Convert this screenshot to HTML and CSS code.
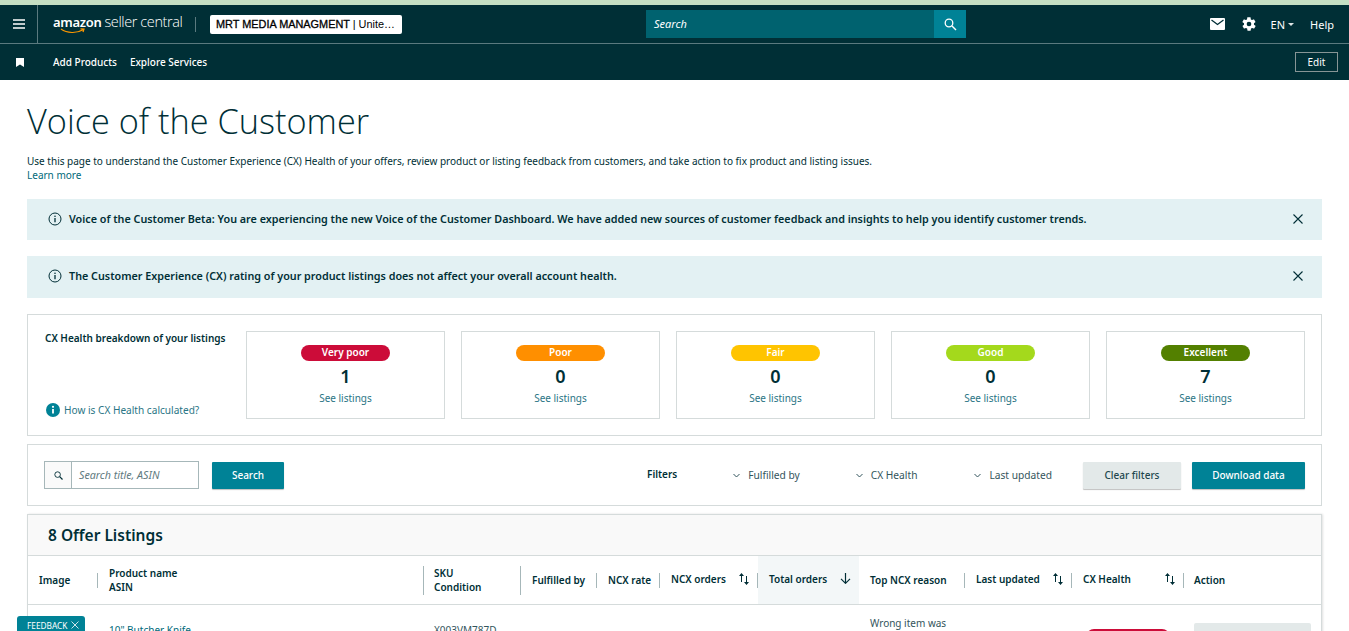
FILE: index.html
```html
<!DOCTYPE html>
<html lang="en">
<head>
    <meta charset="UTF-8">
    <meta name="viewport" content="width=device-width, initial-scale=1.0">
    <title>Voice of the Customer</title>
    <link rel="stylesheet" href="styles.css">
</head>
<body>
    <div class="top-strip"></div>
    <nav class="main-nav">
        <div class="menu-cell">
            <svg width="12" height="10" viewBox="0 0 12 10"><path d="M0 1h12M0 5h12M0 9h12" stroke="#fff" stroke-width="1.4"/></svg>
        </div>
        <div class="logo">
            <span class="logo-amazon">amazon<svg class="logo-smile" width="26" height="6" viewBox="0 0 26 6"><path d="M1 1c6 4.500 16 4.500 22 .8M20.500 .8l3.500 .2-1 3" fill="none" stroke="#f90" stroke-width="1.200"/></svg></span>
            <span class="logo-seller">seller central</span>
        </div>
        <div class="logo-divider"></div>
        <div class="account-box"><b>MRT MEDIA MANAGMENT</b> | Unite…</div>
        <div class="nav-search">
            <span class="nav-search-text">Search</span>
            <span class="nav-search-btn">
                <svg width="13" height="13" viewBox="0 0 13 13"><circle cx="5" cy="5" r="3.800" fill="none" stroke="#fff" stroke-width="1.300"/><path d="M8 8l4 4" stroke="#fff" stroke-width="1.500"/></svg>
            </span>
        </div>
        <div class="nav-right">
            <svg width="15" height="12" viewBox="0 0 15 12"><path d="M1 0h13a1 1 0 0 1 1 1v10a1 1 0 0 1-1 1H1a1 1 0 0 1-1-1V1a1 1 0 0 1 1-1z" fill="#fff"/><path d="M1.500 2l6 4.500 6-4.500" fill="none" stroke="#002e36" stroke-width="1.300"/></svg>
            <svg class="gear" width="16" height="16" viewBox="0 0 24 24"><path fill="#fff" d="M19.400 13c.1-.3.1-.7.1-1s0-.7-.1-1l2.100-1.600c.2-.2.200-.4.100-.6l-2-3.500c-.1-.2-.4-.3-.6-.2l-2.500 1c-.5-.4-1.100-.7-1.700-1l-.4-2.600c0-.3-.2-.5-.5-.5h-4c-.3 0-.5.200-.5.500l-.4 2.600c-.6.300-1.200.6-1.700 1l-2.500-1c-.2-.1-.5 0-.6.200l-2 3.500c-.1.200-.1.400.1.600L4.600 11c-.1.300-.1.700-.1 1s0 .7.1 1l-2.100 1.600c-.2.200-.2.400-.1.600l2 3.500c.1.200.4.300.6.200l2.500-1c.5.400 1.100.7 1.700 1l.4 2.600c0 .3.200.5.500.5h4c.3 0 .5-.2.500-.5l.4-2.600c.6-.3 1.200-.6 1.700-1l2.500 1c.2.100.5 0 .6-.2l2-3.500c.1-.2.100-.4-.1-.6L19.400 13zM12 15.500a3.500 3.500 0 1 1 0-7 3.500 3.500 0 0 1 0 7z"/></svg>
            <span class="lang">EN<i class="caret"></i></span>
            <span class="help">Help</span>
        </div>
    </nav>
    <nav class="sub-nav">
        <svg class="bookmark" width="8" height="9" viewBox="0 0 8 9"><path d="M0 0h8v9L4 6.500 0 9z" fill="#fff"/></svg>
        <a class="sub-link">Add Products</a>
        <a class="sub-link">Explore Services</a>
        <span class="edit-btn">Edit</span>
    </nav>

    <main class="content">
        <h1>Voice of the Customer</h1>
        <p class="intro">Use this page to understand the Customer Experience (CX) Health of your offers, review product or listing feedback from customers, and take action to fix product and listing issues.</p>
        <a class="link learn-more">Learn more</a>

        <div class="alert">
            <svg class="info" width="14" height="14" viewBox="0 0 14 14"><circle cx="7" cy="7" r="6" fill="none" stroke="#002e36" stroke-width="1"/><path d="M7 6v4.200" stroke="#002e36" stroke-width="1.300"/><circle cx="7" cy="4.200" r=".8" fill="#002e36"/></svg>
            <span class="alert-text">Voice of the Customer Beta: You are experiencing the new Voice of the Customer Dashboard. We have added new sources of customer feedback and insights to help you identify customer trends.</span>
            <svg class="close" width="10" height="10" viewBox="0 0 10 10"><path d="M.5 .5l9 9M9.500 .5l-9 9" stroke="#002e36" stroke-width="1.100"/></svg>
        </div>
        <div class="alert alert-second">
            <svg class="info" width="14" height="14" viewBox="0 0 14 14"><circle cx="7" cy="7" r="6" fill="none" stroke="#002e36" stroke-width="1"/><path d="M7 6v4.200" stroke="#002e36" stroke-width="1.300"/><circle cx="7" cy="4.200" r=".8" fill="#002e36"/></svg>
            <span class="alert-text">The Customer Experience (CX) rating of your product listings does not affect your overall account health.</span>
            <svg class="close" width="10" height="10" viewBox="0 0 10 10"><path d="M.5 .5l9 9M9.500 .5l-9 9" stroke="#002e36" stroke-width="1.100"/></svg>
        </div>

        <section class="panel health-panel">
            <div class="health-side">
                <div class="health-title">CX Health breakdown of your listings</div>
                <div class="health-how">
                    <svg width="14" height="14" viewBox="0 0 14 14"><circle cx="7" cy="7" r="7" fill="#008296"/><path d="M7 6v4.500" stroke="#fff" stroke-width="1.800"/><circle cx="7" cy="3.800" r="1.100" fill="#fff"/></svg>
                    <a class="link link-soft">How is CX Health calculated?</a>
                </div>
            </div>
            <div class="health-card"><span class="pill very-poor">Very poor</span><span class="count">1</span><a class="link link-soft">See listings</a></div>
            <div class="health-card"><span class="pill poor">Poor</span><span class="count">0</span><a class="link link-soft">See listings</a></div>
            <div class="health-card"><span class="pill fair">Fair</span><span class="count">0</span><a class="link link-soft">See listings</a></div>
            <div class="health-card"><span class="pill good">Good</span><span class="count">0</span><a class="link link-soft">See listings</a></div>
            <div class="health-card"><span class="pill excellent">Excellent</span><span class="count">7</span><a class="link link-soft">See listings</a></div>
        </section>

        <section class="panel filter-panel">
            <div class="search-box">
                <span class="search-icon">
                    <svg width="9" height="9" viewBox="0 0 9 9"><circle cx="3.600" cy="3.600" r="2.800" fill="none" stroke="#002e36" stroke-width=".9"/><path d="M5.700 5.700L8.500 8.500" stroke="#002e36" stroke-width="1.200"/></svg>
                </span>
                <span class="search-hint">Search title, ASIN</span>
            </div>
            <span class="btn btn-primary search-btn">Search</span>
            <span class="filters-label">Filters</span>
            <span class="filter filter-fulfilled"><svg width="7" height="5" viewBox="0 0 7 5"><path d="M.5 1l3 3 3-3" fill="none" stroke="#33555c" stroke-width="1"/></svg>Fulfilled by</span>
            <span class="filter filter-health"><svg width="7" height="5" viewBox="0 0 7 5"><path d="M.5 1l3 3 3-3" fill="none" stroke="#33555c" stroke-width="1"/></svg>CX Health</span>
            <span class="filter filter-updated"><svg width="7" height="5" viewBox="0 0 7 5"><path d="M.5 1l3 3 3-3" fill="none" stroke="#33555c" stroke-width="1"/></svg>Last updated</span>
            <span class="btn btn-light clear-btn">Clear filters</span>
            <span class="btn btn-primary download-btn">Download data</span>
        </section>

        <section class="listings">
            <h2 class="listings-title">8 Offer Listings</h2>
            <div class="grid-row grid-head">
                <div class="th"><span>Image</span><i class="sep"></i></div>
                <div class="th"><span>Product name<br>ASIN</span><i class="sep sep-tall"></i></div>
                <div class="th th-tight"><span>SKU<br>Condition</span><i class="sep sep-tall"></i></div>
                <div class="th"><span>Fulfilled by</span><i class="sep"></i></div>
                <div class="th"><span>NCX rate</span><i class="sep"></i></div>
                <div class="th th-sortable"><span>NCX orders</span><svg class="sort" width="10" height="12" viewBox="0 0 10 12"><path d="M2.500 9V2" stroke="#002e36" stroke-width="1"/><path d="M2.500 0L5 3H0zM7.500 12L5 9h5z" fill="#002e36"/><path d="M7.500 3v7" stroke="#002e36" stroke-width="1"/></svg><i class="sep"></i></div>
                <div class="th th-sortable th-sorted"><span>Total orders</span><svg class="sort" width="11" height="11" viewBox="0 0 11 11"><path d="M5.500 0v10M1 5.800l4.500 4.500L10 5.800" fill="none" stroke="#002e36" stroke-width="1.200"/></svg></div>
                <div class="th th-after"><span>Top NCX reason</span><i class="sep"></i></div>
                <div class="th th-sortable"><span>Last updated</span><svg class="sort" width="10" height="12" viewBox="0 0 10 12"><path d="M2.500 9V2" stroke="#002e36" stroke-width="1"/><path d="M2.500 0L5 3H0zM7.500 12L5 9h5z" fill="#002e36"/><path d="M7.500 3v7" stroke="#002e36" stroke-width="1"/></svg><i class="sep"></i></div>
                <div class="th th-sortable"><span>CX Health</span><svg class="sort" width="10" height="12" viewBox="0 0 10 12"><path d="M2.500 9V2" stroke="#002e36" stroke-width="1"/><path d="M2.500 0L5 3H0zM7.500 12L5 9h5z" fill="#002e36"/><path d="M7.500 3v7" stroke="#002e36" stroke-width="1"/></svg><i class="sep"></i></div>
                <div class="th th-tight"><span>Action</span></div>
            </div>
            <div class="grid-row grid-body">
                <div class="td"></div>
                <div class="td td-low"><a class="link">10" Butcher Knife</a></div>
                <div class="td td-tight td-low">X003VM787D</div>
                <div class="td"></div>
                <div class="td"></div>
                <div class="td"></div>
                <div class="td"></div>
                <div class="td td-reason">Wrong item was</div>
                <div class="td"></div>
                <div class="td"><span class="row-pill"></span></div>
                <div class="td td-tight"><span class="row-action"></span></div>
            </div>
        </section>
    </main>

    <div class="feedback">FEEDBACK<svg class="feedback-x" width="8" height="8" viewBox="0 0 8 8"><path d="M.5 .5l7 7M7.500 .5l-7 7" stroke="#fff" stroke-width=".8"/></svg></div>
</body>
</html>
```

FILE: styles.css
```css
:root {
    --dark: #002f36;
    --teal: #008296;
    --link: #00697a;
    --line: #d5dbdb;
}

* {
    margin: 0;
    padding: 0;
    box-sizing: border-box;
}

html, body {
    height: 100vh;
    overflow: hidden;
}

body {
    background-color: #fff;
    color: var(--dark);
    font-family: "Noto Sans", sans-serif;
    font-size: 11px;
}

.top-strip {
    height: 5px;
    background-color: #c5dfc4;
}

.main-nav {
    display: flex;
    align-items: center;
    height: 39px;
    background-color: var(--dark);
    border-bottom: 1px solid #5b7a7f;
    color: #fff;
}

.menu-cell {
    display: flex;
    flex: none;
    align-items: center;
    justify-content: center;
    width: 38px;
    height: 100%;
    border-right: 1px solid #5b7a7f;
}

.logo {
    display: flex;
    flex: none;
    align-items: baseline;
    gap: 3px;
    width: 142px;
    margin-left: 15px;
    margin-top: -5px;
    white-space: nowrap;
}

.logo-amazon {
    position: relative;
    font-size: 13px;
    font-weight: 600;
    letter-spacing: -.3px;
}

.logo-smile {
    position: absolute;
    left: 7px;
    top: 15px;
}

.logo-seller {
    font-family: "Open Sans", sans-serif;
    font-size: 14.500px;
    font-weight: 300;
    letter-spacing: -.4px;
}

.logo-divider {
    flex: none;
    width: 1px;
    height: 15px;
    background-color: #5b7a7f;
}

.account-box {
    flex: none;
    width: 192px;
    height: 19px;
    margin-left: 14px;
    padding-left: 6px;
    background-color: #fff;
    border-radius: 2px;
    color: #000;
    font-family: "Liberation Sans", sans-serif;
    font-size: 10.900px;
    line-height: 19px;
    white-space: nowrap;
}

.account-box b {
    font-weight: normal;
    -webkit-text-stroke: .3px #000;
}

.nav-search {
    display: flex;
    flex: none;
    width: 320px;
    height: 28px;
    margin-left: 244px;
    background-color: #00626f;
}

.nav-search-text {
    flex: 1;
    padding-left: 8px;
    font-size: 11px;
    font-style: italic;
    line-height: 28px;
}

.nav-search-btn {
    display: flex;
    align-items: center;
    justify-content: center;
    width: 32px;
    background-color: var(--teal);
}

.nav-right {
    display: flex;
    align-items: center;
    margin-left: auto;
    padding-right: 15px;
    font-size: 11px;
}

.gear {
    margin-left: 16px;
}

.lang {
    display: flex;
    align-items: center;
    margin-left: 14px;
}

.caret {
    width: 0;
    height: 0;
    margin-left: 3px;
    border: 3.500px solid transparent;
    border-top-color: #dfe6e6;
    border-bottom: 0;
}

.help {
    margin-left: 16px;
}

.sub-nav {
    display: flex;
    align-items: center;
    height: 36px;
    background-color: var(--dark);
    color: #fff;
}

.bookmark {
    margin-left: 16px;
    margin-right: 29px;
}

.sub-link {
    margin-right: 13px;
    font-size: 10px;
    font-weight: 500;
}

.edit-btn {
    width: 43px;
    height: 20px;
    margin-left: auto;
    margin-right: 11px;
    border: 1px solid #879596;
    font-size: 10px;
    line-height: 18px;
    text-align: center;
}

.content {
    padding: 0 27px;
}

h1 {
    height: 41px;
    margin-top: 20px;
    font-family: "Open Sans", sans-serif;
    font-size: 34.300px;
    font-weight: 300;
    line-height: 41px;
}

.intro {
    margin-top: 13px;
    font-size: 10px;
    line-height: 14px;
}

.link {
    color: var(--link);
}

.link-soft {
    color: #2a7585;
}

.learn-more {
    display: block;
    font-size: 10px;
    line-height: 14px;
}

.alert {
    display: flex;
    align-items: center;
    height: 41px;
    margin-top: 17px;
    padding: 0 19px 2px 21px;
    background-color: #e3f1f3;
}

.alert-second {
    height: 42px;
    margin-top: 16px;
    padding-bottom: 3px;
}

.alert-text {
    flex: 1;
    margin-left: 7px;
    font-size: 10.770px;
    font-weight: 600;
}

.panel {
    border: 1px solid var(--line);
}

.health-panel {
    display: flex;
    gap: 16px;
    height: 122px;
    margin-top: 16px;
    padding: 16px 16px 16px 17px;
}

.health-side {
    display: flex;
    flex-direction: column;
    justify-content: space-between;
    width: 185px;
}

.health-title {
    font-size: 10px;
    font-weight: 600;
    line-height: 14px;
}

.health-how {
    display: flex;
    align-items: center;
    gap: 4px;
    margin-bottom: 2px;
    margin-left: 1px;
    font-size: 10.100px;
}

.health-card {
    display: flex;
    flex: 1;
    flex-direction: column;
    align-items: center;
    padding-top: 13px;
    border: 1px solid var(--line);
    font-size: 10px;
}

.pill {
    width: 89px;
    height: 16px;
    border-radius: 8px;
    color: #fff;
    font-size: 10px;
    font-weight: 600;
    line-height: 15px;
    text-align: center;
}

.very-poor { background-color: #cc0c39; }
.poor { background-color: #ff8f00; }
.fair { background-color: #ffc400; }
.good { background-color: #a4d91c; }
.excellent { background-color: #538000; }

.count {
    margin-top: 2px;
    font-size: 18px;
    font-weight: 600;
    line-height: 27px;
}

.health-card .link {
    margin-top: 1px;
    line-height: 14px;
}

.filter-panel {
    display: flex;
    align-items: center;
    height: 62px;
    margin-top: 8px;
    padding: 0 16px;
}

.search-box {
    display: flex;
    align-items: stretch;
    width: 155px;
    height: 28px;
    border: 1px solid #a6b7b9;
}

.search-icon {
    display: flex;
    align-items: center;
    justify-content: center;
    width: 27px;
    border-right: 1px solid #a6b7b9;
    background-color: #fafafa;
}

.search-hint {
    padding-left: 7px;
    color: #5f7a80;
    font-size: 10.700px;
    font-style: italic;
    line-height: 26px;
}

.btn {
    height: 27px;
    border-radius: 1px;
    box-shadow: 0 1px 1px rgba(0, 0, 0, .25);
    font-size: 10px;
    font-weight: 500;
    line-height: 27px;
    text-align: center;
}

.btn-primary {
    background-color: var(--teal);
    color: #fff;
}

.btn-light {
    background-color: #e3e9e9;
    color: #22474e;
}

.search-btn {
    width: 72px;
    margin-left: 13px;
}

.filters-label {
    margin-top: -2px;
    margin-left: 363px;
    font-size: 10px;
    font-weight: 600;
}

.filter {
    display: flex;
    align-items: center;
    gap: 8px;
    color: #33555c;
    font-size: 10.200px;
}

.filter-fulfilled { margin-left: 56px; }
.filter-health { margin-left: 56px; }
.filter-updated { margin-left: 57px; }

.clear-btn {
    width: 98px;
    margin-left: auto;
}

.download-btn {
    width: 113px;
    margin-left: 11px;
}

.listings {
    height: 200px;
    margin-top: 8px;
    border: 1px solid var(--line);
    box-shadow: 1px 0 2px rgba(0, 0, 0, .12);
}

.listings-title {
    height: 41px;
    padding-left: 20px;
    background-color: #f9f9f9;
    border-bottom: 1px solid var(--line);
    font-size: 15.500px;
    font-weight: 600;
    line-height: 40px;
}

.grid-row {
    display: grid;
    grid-template-columns: 70px 326px 97px 76px 63px 98px 101px 106px 107px 112px 1fr;
}

.grid-head {
    height: 49px;
    border-bottom: 1px solid var(--line);
    font-size: 10px;
    font-weight: 600;
    line-height: 14px;
}

.th {
    display: flex;
    align-items: center;
    justify-content: space-between;
    padding-left: 11px;
}

.th-tight,
.td-tight {
    padding-left: 10px;
}

.th-sortable span {
    margin-top: -2px;
}

.th-sorted {
    padding-right: 8px;
    background-color: #f3f7f8;
}

.sort {
    flex: none;
    margin-top: -3px;
    margin-left: auto;
    margin-right: 8px;
}

.th-sorted .sort {
    margin-right: 0;
}

.sep {
    flex: none;
    width: 1px;
    height: 15px;
    background-color: #a6b7b9;
}

.sep-tall {
    height: 29px;
}

.td {
    padding-left: 11px;
    color: #33555c;
    font-size: 10px;
}

.td.td-tight {
    padding-left: 10px;
}

.td-low {
    padding-top: 18px;
}

.td-reason {
    padding-top: 11px;
}

.row-pill {
    display: block;
    width: 84px;
    height: 16px;
    margin-top: 24px;
    margin-left: 3px;
    border-radius: 8px;
    background-color: #cc0c39;
}

.row-action {
    display: block;
    width: 117px;
    height: 30px;
    margin-top: 18px;
    border-radius: 2px;
    background-color: #e3e9e9;
}

.feedback {
    position: fixed;
    left: 17px;
    bottom: 0;
    display: flex;
    align-items: center;
    gap: 3px;
    width: 68px;
    height: 15px;
    padding-top: 3px;
    padding-left: 10px;
    background-color: var(--teal);
    border-radius: 3px 3px 0 0;
    color: #fff;
    font-size: 8.300px;
    white-space: nowrap;
}

.feedback-x {
    flex: none;
}
```
